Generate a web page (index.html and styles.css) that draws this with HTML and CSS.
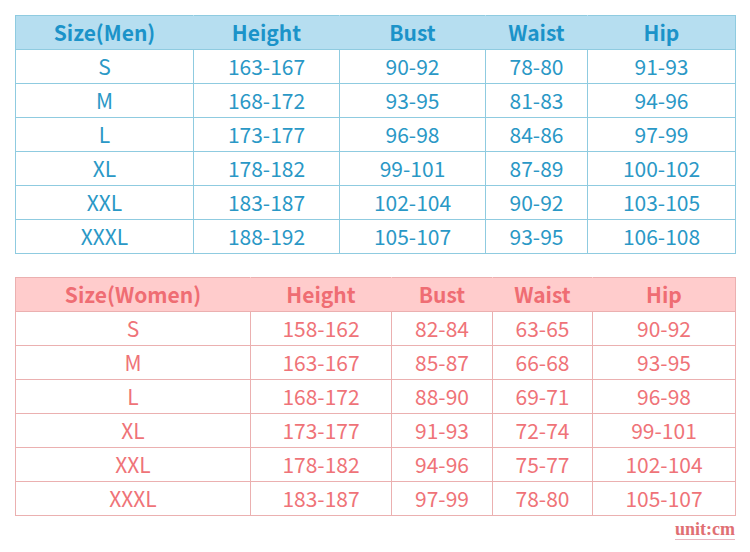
FILE: index.html
```html
<!DOCTYPE html>
<html>
<head>
<meta charset="utf-8">
<link rel="stylesheet" href="styles.css">
</head>
<body>
<div class="page">
  <table class="chart men">
    <colgroup><col class="c1"><col class="c2"><col class="c3"><col class="c4"><col class="c5"></colgroup>
    <thead><tr><th>Size(Men)</th><th>Height</th><th>Bust</th><th>Waist</th><th>Hip</th></tr></thead>
    <tbody>
      <tr><td>S</td><td>163-167</td><td>90-92</td><td>78-80</td><td>91-93</td></tr>
      <tr><td>M</td><td>168-172</td><td>93-95</td><td>81-83</td><td>94-96</td></tr>
      <tr><td>L</td><td>173-177</td><td>96-98</td><td>84-86</td><td>97-99</td></tr>
      <tr><td>XL</td><td>178-182</td><td>99-101</td><td>87-89</td><td>100-102</td></tr>
      <tr><td>XXL</td><td>183-187</td><td>102-104</td><td>90-92</td><td>103-105</td></tr>
      <tr><td>XXXL</td><td>188-192</td><td>105-107</td><td>93-95</td><td>106-108</td></tr>
    </tbody>
  </table>
  <table class="chart women">
    <colgroup><col class="c1"><col class="c2"><col class="c3"><col class="c4"><col class="c5"></colgroup>
    <thead><tr><th>Size(Women)</th><th>Height</th><th>Bust</th><th>Waist</th><th>Hip</th></tr></thead>
    <tbody>
      <tr><td>S</td><td>158-162</td><td>82-84</td><td>63-65</td><td>90-92</td></tr>
      <tr><td>M</td><td>163-167</td><td>85-87</td><td>66-68</td><td>93-95</td></tr>
      <tr><td>L</td><td>168-172</td><td>88-90</td><td>69-71</td><td>96-98</td></tr>
      <tr><td>XL</td><td>173-177</td><td>91-93</td><td>72-74</td><td>99-101</td></tr>
      <tr><td>XXL</td><td>178-182</td><td>94-96</td><td>75-77</td><td>102-104</td></tr>
      <tr><td>XXXL</td><td>183-187</td><td>97-99</td><td>78-80</td><td>105-107</td></tr>
    </tbody>
  </table>
  <div class="unit"><span>unit:cm</span></div>
</div>
</body>
</html>
```
FILE: styles.css
```css
html, body {
  margin: 0;
  padding: 0;
  background: #ffffff;
}
.page {
  width: 750px;
  padding: 15px 15px 0 15px;
  box-sizing: border-box;
  font-family: "Noto Sans CJK SC", "Noto Sans", sans-serif;
}
.chart {
  width: 720px;
  border-collapse: collapse;
  table-layout: fixed;
}
.chart th, .chart td {
  height: 34px;
  padding: 0;
  text-align: center;
  vertical-align: middle;
  box-sizing: border-box;
  font-size: 21px;
  line-height: 1;
}
.chart th {
  font-weight: 700;
  font-size: 21px;
}
.chart td {
  font-weight: 400;
}

.men th { background: #b6def0; color: #1b93c9; border: 1px solid #b6def0; }
.men td { color: #2a98c6; border: 1px solid #8fcbe0; }
.men thead tr th { border-bottom-color: #8fcbe0; }
.men th:first-child { border-left-color: #8fcbe0; }
.men th:last-child { border-right-color: #8fcbe0; }
.men th { border-top-color: #8fcbe0; }
.men .c1 { width: 178px; }
.men .c2 { width: 146px; }
.men .c3 { width: 146px; }
.men .c4 { width: 102px; }
.men .c5 { width: 148px; }

.women { margin-top: 23px; }
.women th { background: #ffcccc; color: #ef6d73; border: 1px solid #ffcccc; }
.women td { color: #ef7378; border: 1px solid #ebb0b0; }
.women thead tr th { border-bottom-color: #ebb0b0; }
.women th:first-child { border-left-color: #ebb0b0; }
.women th:last-child { border-right-color: #ebb0b0; }
.women th { border-top-color: #ebb0b0; }
.women .c1 { width: 235px; }
.women .c2 { width: 141px; }
.women .c3 { width: 101px; }
.women .c4 { width: 100px; }
.women .c5 { width: 143px; }

.unit {
  display: flex;
  justify-content: flex-end;
  padding-top: 3px;
}
.unit span {
  font-family: "Liberation Serif", serif;
  font-weight: 700;
  font-size: 18px;
  color: #e06f73;
  text-decoration: underline;
  text-decoration-color: #e8b6c0;
  text-underline-offset: 4px;
}
```
